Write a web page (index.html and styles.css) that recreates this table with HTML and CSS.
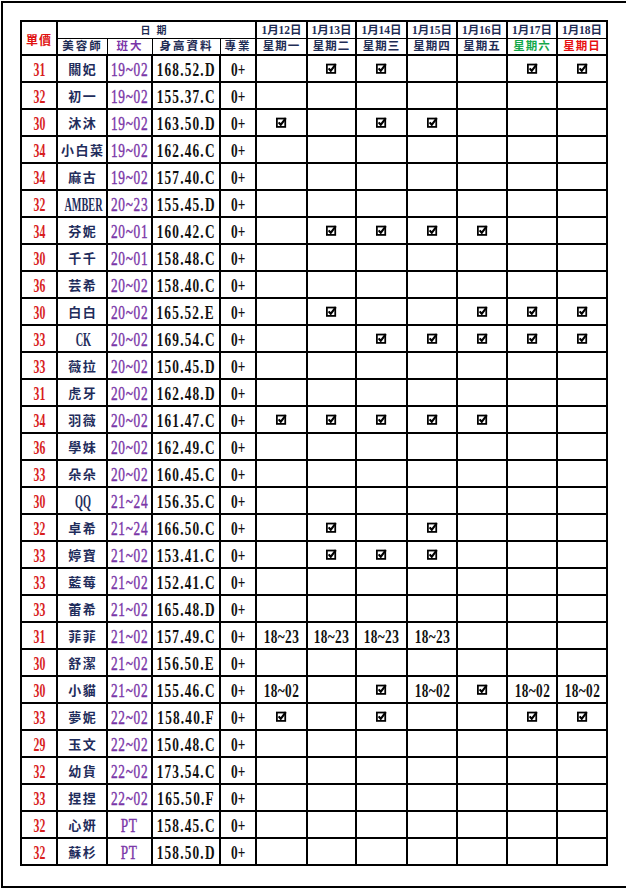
FILE: index.html
```html
<!DOCTYPE html>
<html lang="zh-Hant">
<head>
<meta charset="utf-8">
<title>排班表</title>
<link rel="stylesheet" href="styles.css">
</head>
<body>
<svg class="defs" aria-hidden="true">
  <symbol id="ck" viewBox="0 0 10 10">
    <rect x="0.8" y="1.4" width="7.6" height="7.6" fill="none" stroke="#000" stroke-width="1.6"/>
    <path d="M2.4 4.9 L4.3 7.1 L8.9 1.0" fill="none" stroke="#000" stroke-width="2"/>
  </symbol>
</svg>
<div class="page">
<table class="sheet">
  <colgroup>
    <col class="w36"><col class="w50"><col class="w45"><col class="w68"><col class="w36">
    <col class="w51"><col class="w49"><col class="w51"><col class="w50"><col class="w50"><col class="w50"><col class="w50">
  </colgroup>
  <thead>
    <tr class="hr1">
      <th rowspan="2" class="price-h">單價</th>
      <th colspan="4" class="date-h">日期</th>
      <th class="dt">1月12日</th>
      <th class="dt">1月13日</th>
      <th class="dt">1月14日</th>
      <th class="dt">1月15日</th>
      <th class="dt">1月16日</th>
      <th class="dt">1月17日</th>
      <th class="dt">1月18日</th>
    </tr>
    <tr class="hr2">
      <th class="lab thin">美容師</th>
      <th class="lab thin purple">班大</th>
      <th class="lab thin">身高資料</th>
      <th class="lab">專業</th>
      <th class="wd">星期一</th>
      <th class="wd">星期二</th>
      <th class="wd">星期三</th>
      <th class="wd">星期四</th>
      <th class="wd">星期五</th>
      <th class="wd sat">星期六</th>
      <th class="wd sun">星期日</th>
    </tr>
  </thead>
  <tbody>
    <tr><td class="p"><span class="num">31</span></td><td class="nm">關妃</td><td class="cl"><span class="num">19~02</span></td><td class="sz"><span class="num">168.52.D</span></td><td class="pro"><span class="num">0+</span></td>
      <td></td><td><svg class="chk"><use href="#ck"/></svg></td><td><svg class="chk"><use href="#ck"/></svg></td><td></td><td></td><td><svg class="chk"><use href="#ck"/></svg></td><td><svg class="chk"><use href="#ck"/></svg></td></tr>
    <tr><td class="p"><span class="num">32</span></td><td class="nm">初一</td><td class="cl"><span class="num">19~02</span></td><td class="sz"><span class="num">155.37.C</span></td><td class="pro"><span class="num">0+</span></td>
      <td></td><td></td><td></td><td></td><td></td><td></td><td></td></tr>
    <tr><td class="p"><span class="num">30</span></td><td class="nm">沐沐</td><td class="cl"><span class="num">19~02</span></td><td class="sz"><span class="num">163.50.D</span></td><td class="pro"><span class="num">0+</span></td>
      <td><svg class="chk"><use href="#ck"/></svg></td><td></td><td><svg class="chk"><use href="#ck"/></svg></td><td><svg class="chk"><use href="#ck"/></svg></td><td></td><td></td><td></td></tr>
    <tr><td class="p"><span class="num">34</span></td><td class="nm">小白菜</td><td class="cl"><span class="num">19~02</span></td><td class="sz"><span class="num">162.46.C</span></td><td class="pro"><span class="num">0+</span></td>
      <td></td><td></td><td></td><td></td><td></td><td></td><td></td></tr>
    <tr><td class="p"><span class="num">34</span></td><td class="nm">麻古</td><td class="cl"><span class="num">19~02</span></td><td class="sz"><span class="num">157.40.C</span></td><td class="pro"><span class="num">0+</span></td>
      <td></td><td></td><td></td><td></td><td></td><td></td><td></td></tr>
    <tr><td class="p"><span class="num">32</span></td><td class="nm"><span class="num">AMBER</span></td><td class="cl"><span class="num">20~23</span></td><td class="sz"><span class="num">155.45.D</span></td><td class="pro"><span class="num">0+</span></td>
      <td></td><td></td><td></td><td></td><td></td><td></td><td></td></tr>
    <tr><td class="p"><span class="num">34</span></td><td class="nm">芬妮</td><td class="cl"><span class="num">20~01</span></td><td class="sz"><span class="num">160.42.C</span></td><td class="pro"><span class="num">0+</span></td>
      <td></td><td><svg class="chk"><use href="#ck"/></svg></td><td><svg class="chk"><use href="#ck"/></svg></td><td><svg class="chk"><use href="#ck"/></svg></td><td><svg class="chk"><use href="#ck"/></svg></td><td></td><td></td></tr>
    <tr><td class="p"><span class="num">30</span></td><td class="nm">千千</td><td class="cl"><span class="num">20~01</span></td><td class="sz"><span class="num">158.48.C</span></td><td class="pro"><span class="num">0+</span></td>
      <td></td><td></td><td></td><td></td><td></td><td></td><td></td></tr>
    <tr><td class="p"><span class="num">36</span></td><td class="nm">芸希</td><td class="cl"><span class="num">20~02</span></td><td class="sz"><span class="num">158.40.C</span></td><td class="pro"><span class="num">0+</span></td>
      <td></td><td></td><td></td><td></td><td></td><td></td><td></td></tr>
    <tr><td class="p"><span class="num">30</span></td><td class="nm">白白</td><td class="cl"><span class="num">20~02</span></td><td class="sz"><span class="num">165.52.E</span></td><td class="pro"><span class="num">0+</span></td>
      <td></td><td><svg class="chk"><use href="#ck"/></svg></td><td></td><td></td><td><svg class="chk"><use href="#ck"/></svg></td><td><svg class="chk"><use href="#ck"/></svg></td><td><svg class="chk"><use href="#ck"/></svg></td></tr>
    <tr><td class="p"><span class="num">33</span></td><td class="nm"><span class="num">CK</span></td><td class="cl"><span class="num">20~02</span></td><td class="sz"><span class="num">169.54.C</span></td><td class="pro"><span class="num">0+</span></td>
      <td></td><td></td><td><svg class="chk"><use href="#ck"/></svg></td><td><svg class="chk"><use href="#ck"/></svg></td><td><svg class="chk"><use href="#ck"/></svg></td><td><svg class="chk"><use href="#ck"/></svg></td><td><svg class="chk"><use href="#ck"/></svg></td></tr>
    <tr><td class="p"><span class="num">33</span></td><td class="nm">薇拉</td><td class="cl"><span class="num">20~02</span></td><td class="sz"><span class="num">150.45.D</span></td><td class="pro"><span class="num">0+</span></td>
      <td></td><td></td><td></td><td></td><td></td><td></td><td></td></tr>
    <tr><td class="p"><span class="num">31</span></td><td class="nm">虎牙</td><td class="cl"><span class="num">20~02</span></td><td class="sz"><span class="num">162.48.D</span></td><td class="pro"><span class="num">0+</span></td>
      <td></td><td></td><td></td><td></td><td></td><td></td><td></td></tr>
    <tr><td class="p"><span class="num">34</span></td><td class="nm">羽薇</td><td class="cl"><span class="num">20~02</span></td><td class="sz"><span class="num">161.47.C</span></td><td class="pro"><span class="num">0+</span></td>
      <td><svg class="chk"><use href="#ck"/></svg></td><td><svg class="chk"><use href="#ck"/></svg></td><td><svg class="chk"><use href="#ck"/></svg></td><td><svg class="chk"><use href="#ck"/></svg></td><td><svg class="chk"><use href="#ck"/></svg></td><td></td><td></td></tr>
    <tr><td class="p"><span class="num">36</span></td><td class="nm">學妹</td><td class="cl"><span class="num">20~02</span></td><td class="sz"><span class="num">162.49.C</span></td><td class="pro"><span class="num">0+</span></td>
      <td></td><td></td><td></td><td></td><td></td><td></td><td></td></tr>
    <tr><td class="p"><span class="num">33</span></td><td class="nm">朵朵</td><td class="cl"><span class="num">20~02</span></td><td class="sz"><span class="num">160.45.C</span></td><td class="pro"><span class="num">0+</span></td>
      <td></td><td></td><td></td><td></td><td></td><td></td><td></td></tr>
    <tr><td class="p"><span class="num">30</span></td><td class="nm"><span class="num">QQ</span></td><td class="cl"><span class="num">21~24</span></td><td class="sz"><span class="num">156.35.C</span></td><td class="pro"><span class="num">0+</span></td>
      <td></td><td></td><td></td><td></td><td></td><td></td><td></td></tr>
    <tr><td class="p"><span class="num">32</span></td><td class="nm">卓希</td><td class="cl"><span class="num">21~24</span></td><td class="sz"><span class="num">166.50.C</span></td><td class="pro"><span class="num">0+</span></td>
      <td></td><td><svg class="chk"><use href="#ck"/></svg></td><td></td><td><svg class="chk"><use href="#ck"/></svg></td><td></td><td></td><td></td></tr>
    <tr><td class="p"><span class="num">33</span></td><td class="nm">婷寶</td><td class="cl"><span class="num">21~02</span></td><td class="sz"><span class="num">153.41.C</span></td><td class="pro"><span class="num">0+</span></td>
      <td></td><td><svg class="chk"><use href="#ck"/></svg></td><td><svg class="chk"><use href="#ck"/></svg></td><td><svg class="chk"><use href="#ck"/></svg></td><td></td><td></td><td></td></tr>
    <tr><td class="p"><span class="num">33</span></td><td class="nm">藍莓</td><td class="cl"><span class="num">21~02</span></td><td class="sz"><span class="num">152.41.C</span></td><td class="pro"><span class="num">0+</span></td>
      <td></td><td></td><td></td><td></td><td></td><td></td><td></td></tr>
    <tr><td class="p"><span class="num">33</span></td><td class="nm">蕾希</td><td class="cl"><span class="num">21~02</span></td><td class="sz"><span class="num">165.48.D</span></td><td class="pro"><span class="num">0+</span></td>
      <td></td><td></td><td></td><td></td><td></td><td></td><td></td></tr>
    <tr><td class="p"><span class="num">31</span></td><td class="nm">菲菲</td><td class="cl"><span class="num">21~02</span></td><td class="sz"><span class="num">157.49.C</span></td><td class="pro"><span class="num">0+</span></td>
      <td class="tx"><span class="num">18~23</span></td><td class="tx"><span class="num">18~23</span></td><td class="tx"><span class="num">18~23</span></td><td class="tx"><span class="num">18~23</span></td><td></td><td></td><td></td></tr>
    <tr><td class="p"><span class="num">30</span></td><td class="nm">舒潔</td><td class="cl"><span class="num">21~02</span></td><td class="sz"><span class="num">156.50.E</span></td><td class="pro"><span class="num">0+</span></td>
      <td></td><td></td><td></td><td></td><td></td><td></td><td></td></tr>
    <tr><td class="p"><span class="num">30</span></td><td class="nm">小貓</td><td class="cl"><span class="num">21~02</span></td><td class="sz"><span class="num">155.46.C</span></td><td class="pro"><span class="num">0+</span></td>
      <td class="tx"><span class="num">18~02</span></td><td></td><td><svg class="chk"><use href="#ck"/></svg></td><td class="tx"><span class="num">18~02</span></td><td><svg class="chk"><use href="#ck"/></svg></td><td class="tx"><span class="num">18~02</span></td><td class="tx"><span class="num">18~02</span></td></tr>
    <tr><td class="p"><span class="num">33</span></td><td class="nm">夢妮</td><td class="cl"><span class="num">22~02</span></td><td class="sz"><span class="num">158.40.F</span></td><td class="pro"><span class="num">0+</span></td>
      <td><svg class="chk"><use href="#ck"/></svg></td><td></td><td><svg class="chk"><use href="#ck"/></svg></td><td></td><td></td><td><svg class="chk"><use href="#ck"/></svg></td><td><svg class="chk"><use href="#ck"/></svg></td></tr>
    <tr><td class="p"><span class="num">29</span></td><td class="nm">玉文</td><td class="cl"><span class="num">22~02</span></td><td class="sz"><span class="num">150.48.C</span></td><td class="pro"><span class="num">0+</span></td>
      <td></td><td></td><td></td><td></td><td></td><td></td><td></td></tr>
    <tr><td class="p"><span class="num">32</span></td><td class="nm">幼貨</td><td class="cl"><span class="num">22~02</span></td><td class="sz"><span class="num">173.54.C</span></td><td class="pro"><span class="num">0+</span></td>
      <td></td><td></td><td></td><td></td><td></td><td></td><td></td></tr>
    <tr><td class="p"><span class="num">33</span></td><td class="nm">捏捏</td><td class="cl"><span class="num">22~02</span></td><td class="sz"><span class="num">165.50.F</span></td><td class="pro"><span class="num">0+</span></td>
      <td></td><td></td><td></td><td></td><td></td><td></td><td></td></tr>
    <tr><td class="p"><span class="num">32</span></td><td class="nm">心妍</td><td class="cl"><span class="num">PT</span></td><td class="sz"><span class="num">158.45.C</span></td><td class="pro"><span class="num">0+</span></td>
      <td></td><td></td><td></td><td></td><td></td><td></td><td></td></tr>
    <tr><td class="p"><span class="num">32</span></td><td class="nm">蘇杉</td><td class="cl"><span class="num">PT</span></td><td class="sz"><span class="num">158.50.D</span></td><td class="pro"><span class="num">0+</span></td>
      <td></td><td></td><td></td><td></td><td></td><td></td><td></td></tr>
  </tbody>
</table>
</div>
</body>
</html>
```

FILE: styles.css
```css
html, body {
  margin: 0;
  padding: 0;
  background: #fff;
}
body {
  font-family: "Liberation Serif", "Noto Sans CJK TC", serif;
  color: #000;
}
.defs {
  position: absolute;
  width: 0;
  height: 0;
  overflow: hidden;
}
.page {
  box-sizing: border-box;
  margin: 1px 0 0 1px;
  width: 625px;
  height: 887px;
  border: 2px solid #000;
  border-right: 0;
  padding: 17px 0 0 17px;
}
.sheet {
  table-layout: fixed;
  width: 588px;
  border-collapse: separate;
  border-spacing: 0;
  border-top: 2px solid #000;
  border-left: 2px solid #000;
}
.w36 { width: 36px; }
.w45 { width: 45px; }
.w49 { width: 49px; }
.w50 { width: 50px; }
.w51 { width: 51px; }
.w68 { width: 68px; }

.sheet th,
.sheet td {
  box-sizing: border-box;
  padding: 0;
  border-right: 2px solid #000;
  border-bottom: 2px solid #000;
  text-align: center;
  vertical-align: middle;
  white-space: nowrap;
  overflow: visible;
}
.sheet td {
  height: 27px;
  line-height: 20px;
}

/* header */
.sheet th {
  font-family: "Liberation Serif", "Noto Sans CJK TC", serif;
  font-weight: 700;
  line-height: 13px;
  color: #1f2d55;
}
.hr1 th {
  height: 17px;
  border-bottom-width: 1px;
}
.hr2 th {
  height: 17px;
}
.hr1 th.price-h {
  border-bottom-width: 2px;
  color: #e01010;
  font-size: 12px;
  letter-spacing: 1px;
  font-family: "Noto Sans CJK TC", sans-serif;
  padding-top: 3px;
}
.date-h {
  color: #16a6e8;
  font-size: 10px;
  letter-spacing: 6px;
  font-family: "Noto Sans CJK TC", sans-serif;
  padding-left: 14px;
}
.dt {
  font-size: 11.5px;
  letter-spacing: 0;
  color: #1a2140;
}
.lab {
  font-size: 11.5px;
  letter-spacing: 2px;
  font-family: "Noto Sans CJK TC", sans-serif;
}
.sheet th.thin {
  border-right-width: 1px;
}
.lab.purple { color: #7a36a8; }
.wd {
  font-size: 11.5px;
  letter-spacing: 1px;
  font-family: "Noto Sans CJK TC", sans-serif;
}
.wd.sat { color: #14a84a; }
.wd.sun { color: #e81010; }

/* body cells */
.num {
  display: inline-block;
  font-family: "Liberation Serif", serif;
  font-weight: 700;
  font-size: 19px;
  line-height: 19px;
  transform: scaleX(0.7);
  margin: 0 -16px;
  vertical-align: middle;
}
.p { color: #d81e1e; }
.p .num { transform: scaleX(0.62); }
.nm {
  color: #1f2d5c;
  font-family: "Noto Sans CJK TC", sans-serif;
  font-weight: 700;
  font-size: 13px;
  letter-spacing: 1.5px;
  text-indent: 1.5px;
}
.nm .num { letter-spacing: 0; transform: scaleX(0.54); }
.cl { color: #7a36a8; }
.cl .num {
  font-weight: 400;
  letter-spacing: 1px;
  -webkit-text-stroke: 0.4px #7a36a8;
}
.sz .num { letter-spacing: 1.7px; color: #111; }
.pro .num { color: #111; }
.tx .num { color: #111; letter-spacing: 0.6px; }
.chk {
  width: 11px;
  height: 11px;
  vertical-align: middle;
  position: relative;
  top: -1px;
}
```
